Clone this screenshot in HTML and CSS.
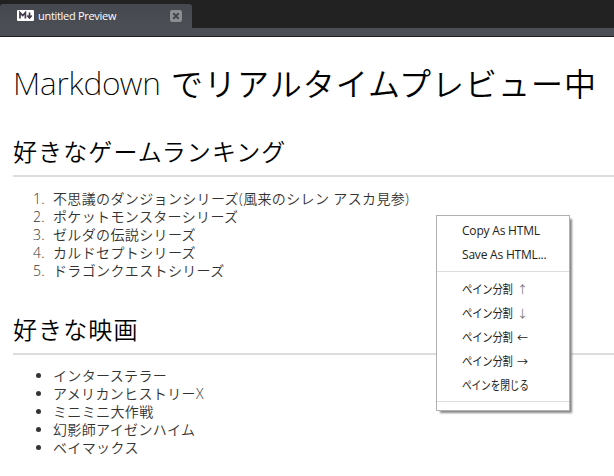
FILE: index.html
```html
<!DOCTYPE html>
<html lang="ja">
<head>
<meta charset="utf-8">
<title>untitled Preview</title>
<link rel="stylesheet" href="styles.css">
</head>
<body>
<header class="tabbar">
  <div class="tab">
    <svg class="md-icon" width="17" height="11" viewBox="0 0 17 11"><rect width="17" height="11" rx="1" fill="#fff"/><path d="M3 8.5V2.7L5.7 5.5L8.4 2.7V8.5M12.5 2.5V7M10.3 5.5L12.5 8L14.7 5.5" fill="none" stroke="#42394d" stroke-width="1.7"/></svg>
    <span class="tab-title">untitled Preview</span>
    <svg class="close" width="12" height="12" viewBox="0 0 12 12"><rect width="12" height="12" rx="2" fill="#8c8e92"/><path d="M3.3 3.3L8.7 8.7M8.7 3.3L3.3 8.7" stroke="#44474d" stroke-width="2"/></svg>
  </div>
</header>
<main class="preview">
  <h1><span class="latin">Markdown</span><span class="jp">でリアルタイムプレビュー中</span></h1>
  <h2>好きなゲームランキング</h2>
  <ol>
    <li>不思議のダンジョンシリーズ(風来のシレン アスカ見参)</li>
    <li>ポケットモンスターシリーズ</li>
    <li>ゼルダの伝説シリーズ</li>
    <li>カルドセプトシリーズ</li>
    <li>ドラゴンクエストシリーズ</li>
  </ol>
  <h2>好きな映画</h2>
  <ul>
    <li>インターステラー</li>
    <li>アメリカンヒストリーX</li>
    <li>ミニミニ大作戦</li>
    <li>幻影師アイゼンハイム</li>
    <li>ベイマックス</li>
  </ul>
</main>
<nav class="menu">
  <div class="item">Copy As HTML</div>
  <div class="item">Save As HTML...</div>
  <hr>
  <div class="item ja"><span class="narrow">ペイン分割</span><span class="arrow thin">↑</span></div>
  <div class="item ja"><span class="narrow">ペイン分割</span><span class="arrow thin">↓</span></div>
  <div class="item ja"><span class="narrow">ペイン分割</span><span class="arrow">←</span></div>
  <div class="item ja"><span class="narrow">ペイン分割</span><span class="arrow">→</span></div>
  <div class="item ja"><span class="narrow close-pane">ペインを閉じる</span></div>
  <hr>
</nav>
</body>
</html>
```

FILE: styles.css
```css
* { box-sizing: border-box; }
body {
  margin: 0;
  height: 476px;
  overflow: hidden;
  background: #fff;
  color: #333;
  font-family: "Open Sans", "Noto Sans CJK JP", sans-serif;
}
.tabbar {
  height: 37px;
  padding-top: 4px;
  background: linear-gradient(#222 0 28px, #4b4e54 28px 36px, #1d1e20 36px);
}
.tab {
  display: flex;
  align-items: center;
  width: 192px;
  height: 24px;
  padding: 0 10px 0 17px;
  border-radius: 3px 3px 0 0;
  background: linear-gradient(#45484e, #4b4e54);
}
.md-icon { margin-top: -2px; }
.tab-title {
  flex: 1;
  margin: -1px 0 0 4px;
  font-size: 11px;
  letter-spacing: -0.3px;
  color: #fff;
  white-space: nowrap;
}
.preview { padding-left: 13px; }
h1, h2 {
  margin: 0;
  color: #000;
  font-weight: 350;
  font-family: "Noto Sans CJK JP", sans-serif;
  white-space: nowrap;
}
h1 {
  display: flex;
  height: 93px;
  line-height: 91px;
  font-size: 32px;
}
.latin {
  width: 158px;
  font-family: "Noto Sans", "Open Sans", sans-serif;
  font-weight: 200;
  letter-spacing: -0.2px;
}
.jp { letter-spacing: 1px; }
h2 {
  height: 47px;
  line-height: 42px;
  font-size: 24px;
  letter-spacing: 1.1px;
  border-bottom: 2px solid #ddd;
}
ol, ul {
  margin: 13px 0 0;
  padding-left: 40px;
}
ol { margin-bottom: 28px; }
ul { margin-top: 12px; }
li {
  height: 18px;
  line-height: 18px;
  font-size: 14px;
  font-weight: 350;
  letter-spacing: 0.36px;
  white-space: nowrap;
}
ol li::marker { content: counter(list-item) ".\00a0\00a0"; }
.menu {
  position: absolute;
  left: 436px;
  top: 215px;
  width: 134px;
  height: 196px;
  padding-top: 3px;
  border: 1px solid #b0b0b0;
  background: #fff;
  box-shadow: 3px 3px 2px -1px #888;
  color: #222;
}
.item {
  display: flex;
  height: 24px;
  padding-left: 25px;
  line-height: 24px;
  font-size: 12px;
  letter-spacing: -0.2px;
  white-space: nowrap;
}
.ja { line-height: 26px; }
.menu hr {
  height: 1px;
  margin: 4px 0 5px;
  border: 0;
  background: #ddd;
}
.narrow {
  flex: none;
  transform: scaleX(.86);
  transform-origin: 0 50%;
  width: 55px;
}
.close-pane { transform: scaleX(.81); }
.arrow { font-size: 11px; }
.thin { color: #777; }
```
